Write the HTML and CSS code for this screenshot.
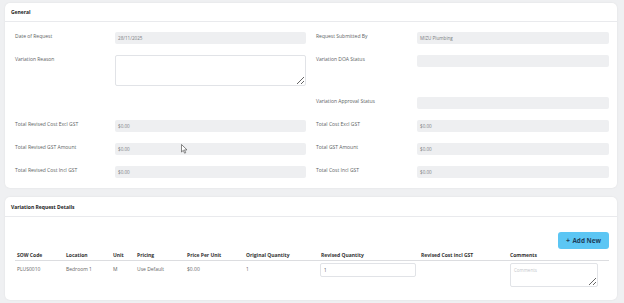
FILE: index.html
```html
<!DOCTYPE html>
<html>
<head>
<meta charset="utf-8">
<link rel="stylesheet" href="styles.css">
</head>
<body>
<div class="page">
  <section class="card card-general">
    <div class="card-header">General</div>
    <div class="card-body form-grid">
      <label class="lbl">Date of Request</label>
      <div class="field">28/11/2025</div>
      <label class="lbl lbl-right">Request Submitted By</label>
      <div class="field">MIZU Plumbing</div>

      <label class="lbl">Variation Reason</label>
      <textarea class="area"></textarea>
      <label class="lbl lbl-right">Variation DOA Status</label>
      <div class="field"></div>

      <div></div>
      <div></div>
      <label class="lbl lbl-right">Variation Approval Status</label>
      <div class="field"></div>

      <label class="lbl">Total Revised Cost Excl GST</label>
      <div class="field">$0.00</div>
      <label class="lbl lbl-right">Total Cost Excl GST</label>
      <div class="field">$0.00</div>

      <label class="lbl">Total Revised GST Amount</label>
      <div class="field field-cursor">$0.00
        <svg class="cursor" width="7" height="10" viewBox="0 0 7 10"><path d="M0.5 0.5 L0.5 8 L2.3 6.3 L3.6 9.2 L4.7 8.7 L3.5 5.9 L6 5.9 Z" fill="#fff" stroke="#555" stroke-width="0.7" stroke-linejoin="round"/></svg>
      </div>
      <label class="lbl lbl-right">Total GST Amount</label>
      <div class="field">$0.00</div>

      <label class="lbl">Total Revised Cost Incl GST</label>
      <div class="field">$0.00</div>
      <label class="lbl lbl-right">Total Cost Incl GST</label>
      <div class="field">$0.00</div>
    </div>
  </section>

  <section class="card card-details">
    <div class="card-header">Variation Request Details</div>
    <div class="card-body details-body">
      <div class="toolbar">
        <button class="btn-add"><span class="plus">+</span>Add New</button>
      </div>
      <table class="grid">
        <colgroup>
          <col class="c1"><col class="c2"><col class="c3"><col class="c4"><col class="c5"><col class="c6"><col class="c7"><col class="c8"><col class="c9">
        </colgroup>
        <thead>
          <tr>
            <th>SOW Code</th><th>Location</th><th>Unit</th><th>Pricing</th><th>Price Per Unit</th><th>Original Quantity</th><th>Revised Quantity</th><th>Revised Cost incl GST</th><th>Comments</th>
          </tr>
        </thead>
        <tbody>
          <tr>
            <td>PLUS0010</td><td>Bedroom 1</td><td>M</td><td>Use Default</td><td>$0.00</td><td>1</td>
            <td><input class="qty" value="1"></td>
            <td></td>
            <td><textarea class="comments" placeholder="Comments"></textarea></td>
          </tr>
        </tbody>
      </table>
    </div>
  </section>
</div>
</body>
</html>
```
FILE: styles.css
```css
* { box-sizing: border-box; }
html, body { margin: 0; padding: 0; }
body {
  background: #eff0f2;
  font-family: "Open Sans", "Noto Sans", sans-serif;
  width: 624px;
  height: 303px;
  overflow: hidden;
}
.page {
  padding: 3px 7px 0 5px;
  display: flex;
  flex-direction: column;
  gap: 9px;
}
.card {
  background: #fff;
  border-radius: 5px;
  box-shadow: 0 0 2px rgba(0,0,0,0.08);
}
.card-general { height: 185px; }
.card-details { height: 103px; }
.card-header {
  height: 19px;
  padding-left: 6px;
  border-bottom: 1px solid #e9eaed;
  font-size: 5px;
  font-weight: 700;
  color: #222;
  display: flex;
  align-items: center;
}
.card-details .card-header { height: 20px; }
.form-grid {
  display: grid;
  grid-template-columns: 100px 191px 111px 192px;
  row-gap: 11px;
  padding: 10px 8px 11px 10px;
}
.lbl {
  font-size: 5px;
  line-height: 8px;
  color: #5c5f63;
  align-self: start;
}
.lbl-right { padding-left: 10px; }
.field {
  height: 12px;
  background: #eeeff1;
  border-radius: 2px;
  font-size: 4.6px;
  line-height: 12px;
  padding-left: 3px;
  color: #7a7d82;
  position: relative;
}
.area {
  height: 31px;
  border: 1px solid #e1e3e7;
  border-radius: 2px;
  background: #fff;
  margin: 0;
  padding: 0;
  resize: vertical;
}
.cursor {
  position: absolute;
  left: 66px;
  top: 1px;
}
.details-body {
  padding: 15px 8px 0 10px;
}
.toolbar {
  display: flex;
  justify-content: flex-end;
}
.btn-add {
  width: 51px;
  height: 17px;
  border: none;
  border-radius: 3px;
  background: #5cc6f4;
  color: #1d3e5c;
  font-family: "Open Sans", "Noto Sans", sans-serif;
  font-size: 6.4px;
  font-weight: 700;
  padding: 0;
}
.plus { margin-right: 2.5px; font-size: 7px; }
.grid {
  width: 594px;
  margin-top: 1px;
  border-collapse: collapse;
  table-layout: fixed;
}
.c1 { width: 49px; }
.c2 { width: 47px; }
.c3 { width: 24px; }
.c4 { width: 50px; }
.c5 { width: 59px; }
.c6 { width: 75px; }
.c7 { width: 100px; }
.c8 { width: 89px; }
.c9 { width: 101px; }
.grid th {
  text-align: left;
  font-size: 5px;
  font-weight: 700;
  color: #333;
  height: 10px;
  line-height: 8px;
  padding: 1px 2px 0;
  border-bottom: 1px solid #dcdde0;
  white-space: nowrap;
}
.grid td {
  font-size: 5px;
  color: #666;
  vertical-align: top;
  padding: 2px 2px 0;
  line-height: 8px;
  white-space: nowrap;
}
.grid td:nth-child(-n+6) { padding-top: 4px; }
.qty {
  display: block;
  width: 96px;
  height: 14px;
  margin-left: -1px;
  border: 1px solid #e1e3e7;
  border-radius: 2px;
  font-family: "Open Sans", "Noto Sans", sans-serif;
  font-size: 4.5px;
  color: #555;
  padding: 0 3px;
  outline: none;
}
.comments {
  display: block;
  width: 88px;
  height: 24px;
  border: 1px solid #e1e3e7;
  border-radius: 2px;
  margin: 0;
  font-family: "Open Sans", "Noto Sans", sans-serif;
  font-size: 4.5px;
  padding: 3px;
  resize: vertical;
}
.comments::placeholder { color: #c4c6ca; }
```
